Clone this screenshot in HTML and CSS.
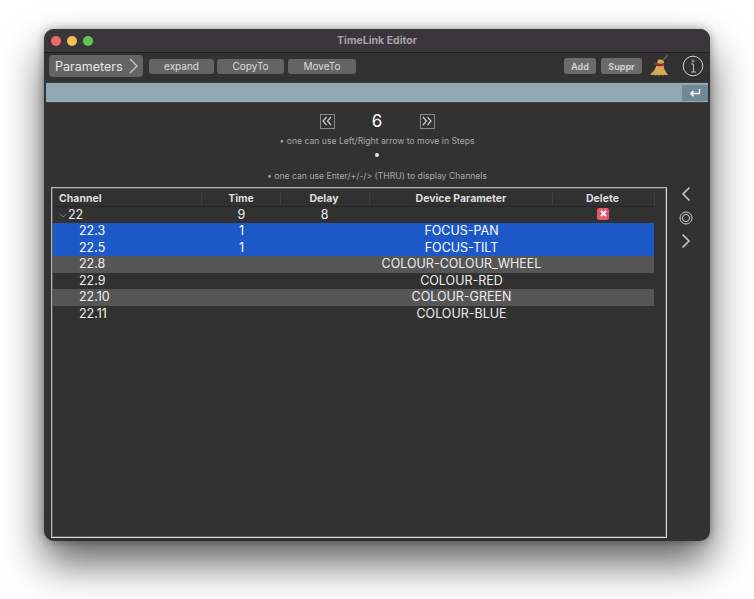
FILE: index.html
```html
<!DOCTYPE html>
<html lang="en">
<head>
    <meta charset="UTF-8">
    <title>TimeLink Editor</title>
    <link rel="stylesheet" href="styles.css">
</head>
<body>
    <div class="window">
        <div class="title-bar">
            <div class="lights">
                <span class="light red"></span>
                <span class="light yellow"></span>
                <span class="light green"></span>
            </div>
            <div class="title">TimeLink Editor</div>
        </div>

        <div class="toolbar">
            <div class="btn-params">Parameters
                <svg width="11" height="16" viewBox="0 0 11 16"><path d="M2 1l7 7-7 7" fill="none" stroke="#c8c8c8" stroke-width="1.3"/></svg>
            </div>
            <div class="btn btn-expand">expand</div>
            <div class="btn btn-copy">CopyTo</div>
            <div class="btn btn-move">MoveTo</div>
            <div class="spacer"></div>
            <div class="btn-small btn-add">Add</div>
            <div class="btn-small btn-suppr">Suppr</div>
            <svg class="broom" width="22" height="24" viewBox="0 0 22 24">
                <path d="M14 7L20 1" stroke="#6e6a60" stroke-width="1.200"/>
                <path d="M10 6c2-1 4 0 6 1l-.5 4c0 3 2 7 4.500 9.500-1 .8-2.500.5-3.500.2-1 .8-2.500.8-3.500.1-1 .8-2.500.8-3.500 0-1 .7-2.500.7-3.500 0-1.500.5-3 .2-4-.5 3-2 5.500-5 6.500-9z" fill="#d3ab58"/>
                <path d="M5.500 10.500c3 2 7 2.500 10 1l1-2.500c-3 1-6.500.8-9.500-.5z" fill="#8e2a22"/>
            </svg>
            <svg class="info" width="22" height="22" viewBox="0 0 22 22">
                <circle cx="11" cy="11" r="9.800" fill="none" stroke="#d0d0d0" stroke-width="1"/>
                <circle cx="11" cy="6" r="1.100" fill="none" stroke="#d0d0d0" stroke-width=".7"/>
                <path d="M9 9h2.500v8M9 17h5" fill="none" stroke="#d0d0d0" stroke-width=".9"/>
            </svg>
        </div>

        <div class="input-bar">
            <div class="enter-btn">
                <svg width="12" height="10" viewBox="0 0 12 10"><path d="M10.500 1v4.500H2M4.500 2.800L1.800 5.500l2.700 2.700" fill="none" stroke="#fff" stroke-width="1.300"/></svg>
            </div>
        </div>

        <div class="stepper">
            <div class="step-btn">
                <svg width="10" height="10" viewBox="0 0 10 10"><path d="M4.500 1L1 5l3.500 4M9 1L5.500 5 9 9" fill="none" stroke="#d0d0d0" stroke-width="1.200"/></svg>
            </div>
            <div class="step-value">6</div>
            <div class="step-btn">
                <svg width="10" height="10" viewBox="0 0 10 10"><path d="M1 1l3.500 4L1 9M5.500 1L9 5 5.500 9" fill="none" stroke="#d0d0d0" stroke-width="1.200"/></svg>
            </div>
        </div>
        <div class="hint">• one can use Left/Right arrow to move in Steps</div>
        <div class="hint-dot"></div>
        <div class="hint hint-last">• one can use Enter/+/-/&gt; (THRU) to display Channels</div>

        <div class="content">
            <div class="table">
                <div class="row head">
                    <div class="left">Channel</div>
                    <div>Time</div>
                    <div>Delay</div>
                    <div>Device Parameter</div>
                    <div>Delete</div>
                </div>
                <div class="row">
                    <div class="left group"><svg width="8" height="5" viewBox="0 0 8 5"><path d="M.5.500L4 4 7.500.500" fill="none" stroke="#777"/></svg>22</div>
                    <div>9</div>
                    <div>8</div>
                    <div></div>
                    <div><span class="del"><svg width="7" height="7" viewBox="0 0 7 7"><path d="M1 1l5 5M6 1L1 6" stroke="#fff" stroke-width="1.800"/></svg></span></div>
                </div>
                <div class="row selected">
                    <div class="left child">22.3</div><div>1</div><div></div><div>FOCUS-PAN</div><div></div>
                </div>
                <div class="row selected">
                    <div class="left child">22.5</div><div>1</div><div></div><div>FOCUS-TILT</div><div></div>
                </div>
                <div class="row alt">
                    <div class="left child">22.8</div><div></div><div></div><div>COLOUR-COLOUR_WHEEL</div><div></div>
                </div>
                <div class="row">
                    <div class="left child">22.9</div><div></div><div></div><div>COLOUR-RED</div><div></div>
                </div>
                <div class="row alt">
                    <div class="left child">22.10</div><div></div><div></div><div>COLOUR-GREEN</div><div></div>
                </div>
                <div class="row">
                    <div class="left child">22.11</div><div></div><div></div><div>COLOUR-BLUE</div><div></div>
                </div>
            </div>
            <div class="side">
                <svg width="10" height="16" viewBox="0 0 10 16"><path d="M8.500 1.500L2 8l6.500 6.500" fill="none" stroke="#cfcfcf" stroke-width="1.500"/></svg>
                <svg width="14" height="14" viewBox="0 0 14 14"><circle cx="7" cy="7" r="6" fill="none" stroke="#cfcfcf"/><circle cx="7" cy="7" r="3.600" fill="none" stroke="#cfcfcf"/></svg>
                <svg width="10" height="16" viewBox="0 0 10 16"><path d="M1.500 1.500L8 8l-6.500 6.500" fill="none" stroke="#cfcfcf" stroke-width="1.500"/></svg>
            </div>
        </div>
    </div>
</body>
</html>
```

FILE: styles.css
```css
html, body {
    height: 100%;
}
body {
    margin: 0;
    padding: 29px 0 0 44px;
    box-sizing: border-box;
    background: white;
    overflow: hidden;
    font-family: "Inter", "Liberation Sans", sans-serif;
    color: white;
}
.window {
    width: 666px;
    height: 512px;
    background: #323232;
    border-radius: 10px;
    box-shadow: 0 22px 42px rgba(0,0,0,0.62), 0 0 10px rgba(0,0,0,0.35);
    overflow: hidden;
    display: flex;
    flex-direction: column;
}
.title-bar {
    height: 23px;
    flex: none;
    background: #3a363c;
    border-bottom: 1px solid #1f1f1f;
    display: flex;
    align-items: center;
    justify-content: center;
    position: relative;
}
.lights {
    position: absolute;
    left: 7px;
    top: 7px;
    display: flex;
    gap: 6px;
}
.light {
    width: 10px;
    height: 10px;
    border-radius: 50%;
}
.red { background: #ed6a5e; }
.yellow { background: #f4bf4f; }
.green { background: #61c554; }
.title {
    font-size: 10.5px;
    font-weight: 700;
    color: #a5a3a6;
}
.toolbar {
    height: 29px;
    flex: none;
    display: flex;
    align-items: center;
    padding: 0 6px 0 5px;
}
.btn-params {
    width: 94px;
    height: 22px;
    box-sizing: border-box;
    padding-left: 6px;
    margin-top: -3px;
    background: #646464;
    border-radius: 4px;
    font-size: 12.5px;
    color: #e8e8e8;
    display: flex;
    align-items: center;
    gap: 5px;
}
.btn {
    height: 15px;
    background: #646464;
    border-radius: 3px;
    font-size: 10px;
    color: #dcdcdc;
    display: flex;
    align-items: center;
    justify-content: center;
    margin-top: -3px;
}
.btn-expand { width: 65px; margin-left: 6px; }
.btn-copy { width: 67px; margin-left: 3px; }
.btn-move { width: 68px; margin-left: 4px; }
.spacer {
    flex: 1;
}
.btn-small {
    height: 16px;
    background: #6b6b6b;
    border-radius: 3px;
    font-size: 9px;
    font-weight: 700;
    color: #cfcfcf;
    display: flex;
    align-items: center;
    justify-content: center;
    margin-top: -3px;
}
.btn-add { width: 32px; }
.btn-suppr { width: 41px; margin-left: 5px; }
.broom {
    margin-left: 6px;
    margin-top: -4px;
}
.info {
    margin-left: 12px;
    margin-top: -3px;
}
.input-bar {
    height: 19px;
    flex: none;
    margin: 0 2px;
    background: #8faab5;
    border-top: 1px solid #4a3c36;
    border-bottom: 1px solid #4a3c36;
    display: flex;
    justify-content: flex-end;
    align-items: center;
}
.enter-btn {
    width: 26px;
    height: 16px;
    background: #6f8a96;
    display: flex;
    align-items: center;
    justify-content: center;
}
.stepper {
    flex: none;
    display: flex;
    justify-content: center;
    align-items: center;
    margin-top: 10px;
    height: 16px;
}
.step-btn {
    width: 13px;
    height: 13px;
    border: 1px solid #8a8a8a;
    display: flex;
    align-items: center;
    justify-content: center;
}
.step-value {
    width: 85px;
    text-align: center;
    font-size: 17px;
}
.hint {
    flex: none;
    margin-top: 6px;
    height: 12px;
    line-height: 12px;
    text-align: center;
    font-size: 8.65px;
    color: #a8a8a8;
}
.hint-dot {
    flex: none;
    width: 4px;
    height: 4px;
    margin: 6px auto 0;
    border-radius: 50%;
    background: #e8e8e8;
}
.hint-last {
    margin-top: 13px;
}
.content {
    flex: 1;
    display: flex;
    min-height: 0;
    margin-top: 5px;
    padding-bottom: 3px;
}
.table {
    width: 616px;
    margin-left: 7px;
    box-sizing: border-box;
    border: 1px solid #b5b5b5;
    border-right-color: #dcdcdc;
    border-bottom-color: #dcdcdc;
    background: #313131;
    box-shadow: inset 0 0 0 1px #5a5a5a;
    padding: 1px 12px 0 1px;
    font-size: 12.5px;
}
.row {
    display: grid;
    grid-template-columns: 149px 79px 89px 183px 102px;
    height: 16.5px;
    line-height: 16.5px;
    text-align: center;
    color: #eee;
}
.row > div:nth-child(3), .row > div:nth-child(5) {
    padding-right: 2px;
}
.head {
    height: 17.5px;
    box-sizing: border-box;
    font-size: 10.5px;
    font-weight: 700;
    color: #dedede;
    border-bottom: 1px solid #272727;
}
.head > div {
    border-right: 1px solid #414141;
    height: 12px;
    line-height: 12px;
    margin-top: 4px;
}
.left {
    text-align: left;
    padding-left: 6px;
}
.group svg {
    margin-right: 1px;
    vertical-align: 1px;
}
.child {
    padding-left: 26px;
}
.selected {
    background: #1c58c8;
    color: white;
}
.alt {
    background: #565656;
}
.del {
    display: inline-flex;
    align-items: center;
    justify-content: center;
    width: 12px;
    height: 12px;
    margin-top: 1px;
    border-radius: 2px;
    background: #e5576f;
    vertical-align: top;
}
.side {
    flex: 1;
    display: flex;
    flex-direction: column;
    align-items: center;
    padding-right: 5px;
    margin-top: -1px;
    gap: 8.5px;
}
```
